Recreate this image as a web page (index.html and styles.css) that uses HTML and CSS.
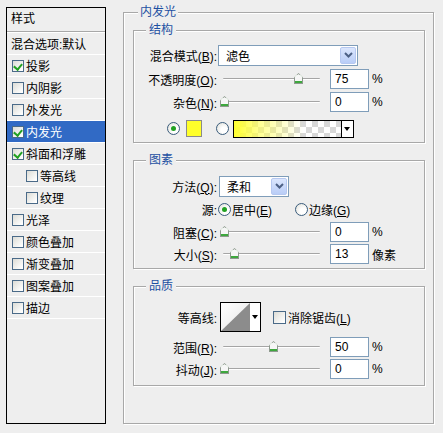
FILE: index.html
```html
<!DOCTYPE html>
<html>
<head>
<meta charset="utf-8">
<title>内发光</title>
<link rel="stylesheet" href="styles.css">
</head>
<body>
<div class="dialog">
  <div class="styles">
    <div class="styles-head">样式</div>
    <div class="item plain">混合选项:默认</div>
    <div class="item"><span class="cb on"></span>投影</div>
    <div class="item"><span class="cb"></span>内阴影</div>
    <div class="item"><span class="cb"></span>外发光</div>
    <div class="item sel"><span class="cb on"></span>内发光</div>
    <div class="item"><span class="cb on"></span>斜面和浮雕</div>
    <div class="item sub-item"><span class="cb"></span>等高线</div>
    <div class="item sub-item"><span class="cb"></span>纹理</div>
    <div class="item"><span class="cb"></span>光泽</div>
    <div class="item"><span class="cb"></span>颜色叠加</div>
    <div class="item"><span class="cb"></span>渐变叠加</div>
    <div class="item"><span class="cb"></span>图案叠加</div>
    <div class="item"><span class="cb"></span>描边</div>
  </div>

  <div class="main">
    <div class="group outer">
      <span class="legend">内发光</span>

      <div class="group sub g-struct">
        <span class="legend">结构</span>
        <div class="row h20">
          <span class="lbl">混合模式(<u>B</u>):</span>
          <div class="select sel-blend"><span class="sel-text">滤色</span><span class="dd"><svg width="9" height="6" viewBox="0 0 9 6"><path d="M1 1 L4.5 4.5 L8 1" fill="none" stroke="#4d6185" stroke-width="2"/></svg></span></div>
        </div>
        <div class="row h20 mt4">
          <span class="lbl">不透明度(<u>O</u>):</span>
          <div class="slider"><span class="track"></span><span class="thumb" style="left:74px"></span></div>
          <span class="num">75</span><span class="unit">%</span>
        </div>
        <div class="row h20 mt3">
          <span class="lbl">杂色(<u>N</u>):</span>
          <div class="slider"><span class="track"></span><span class="thumb" style="left:0px"></span></div>
          <span class="num">0</span><span class="unit">%</span>
        </div>
        <div class="row color-row">
          <span class="radio on"></span>
          <span class="swatch"></span>
          <span class="radio r2"></span>
          <span class="gradient"><span class="grad-fill"></span><span class="grad-dd"></span></span>
        </div>
      </div>

      <div class="group sub g-elem">
        <span class="legend">图素</span>
        <div class="row h20">
          <span class="lbl">方法(<u>Q</u>):</span>
          <div class="select sel-method"><span class="sel-text">柔和</span><span class="dd"><svg width="9" height="6" viewBox="0 0 9 6"><path d="M1 1 L4.5 4.5 L8 1" fill="none" stroke="#4d6185" stroke-width="2"/></svg></span></div>
        </div>
        <div class="row h20 mt3">
          <span class="lbl">源:</span>
          <span class="opt opt1"><span class="radio on"></span><span class="opt-text">居中(<u>E</u>)</span></span>
          <span class="opt"><span class="radio"></span><span class="opt-text">边缘(<u>G</u>)</span></span>
        </div>
        <div class="row h20 mt3">
          <span class="lbl">阻塞(<u>C</u>):</span>
          <div class="slider"><span class="track"></span><span class="thumb" style="left:0px"></span></div>
          <span class="num">0</span><span class="unit">%</span>
        </div>
        <div class="row h20 mt2">
          <span class="lbl">大小(<u>S</u>):</span>
          <div class="slider"><span class="track"></span><span class="thumb" style="left:10px"></span></div>
          <span class="num">13</span><span class="unit">像素</span>
        </div>
      </div>

      <div class="group sub g-quality">
        <span class="legend">品质</span>
        <div class="row h30">
          <span class="lbl">等高线:</span>
          <span class="contour">
            <span class="contour-pic"><svg width="29" height="28" viewBox="0 0 29 28"><defs><linearGradient id="cg" x1="0" y1="0" x2="1" y2="1"><stop offset="0" stop-color="#ffffff"/><stop offset="1" stop-color="#e4e4e4"/></linearGradient></defs><rect width="29" height="28" fill="url(#cg)"/><path d="M0 28 L29 0 L29 28 Z" fill="#8c8c8c"/></svg></span>
            <span class="contour-dd"></span>
          </span>
          <span class="cb big"></span><span class="cb-text">消除锯齿(<u>L</u>)</span>
        </div>
        <div class="row h20 mt5">
          <span class="lbl">范围(<u>R</u>):</span>
          <div class="slider"><span class="track"></span><span class="thumb" style="left:49px"></span></div>
          <span class="num">50</span><span class="unit">%</span>
        </div>
        <div class="row h20 mt2">
          <span class="lbl">抖动(<u>J</u>):</span>
          <div class="slider"><span class="track"></span><span class="thumb" style="left:0px"></span></div>
          <span class="num">0</span><span class="unit">%</span>
        </div>
      </div>
    </div>
  </div>
</div>
</body>
</html>
```
FILE: styles.css
```css
* { box-sizing: border-box; }
body {
  margin: 0;
  background: #eeeeee;
  font-family: "Liberation Sans", "Noto Sans CJK SC", sans-serif;
  font-size: 12px;
  color: #000;
}
u { text-decoration: underline; text-underline-offset: 1px; }

.dialog {
  display: flex;
  align-items: flex-start;
  width: 443px;
  height: 433px;
  padding: 7px 0 0 6px;
}

/* left list */
.styles {
  flex: none;
  width: 100px;
  height: 417px;
  border: 1px solid #000;
  background: #eeeeee;
}
.styles-head {
  height: 24px;
  line-height: 22px;
  padding-left: 4px;
  border-bottom: 1px solid #a8a8a8;
  box-shadow: 0 1px 0 #ffffff;
  margin-bottom: 1px;
}
.item {
  display: flex;
  align-items: center;
  height: 22px;
  border-bottom: 1px solid #ffffff;
  padding-left: 5px;
  white-space: nowrap;
}
.item.plain { padding-left: 4px; }
.item.sub-item { padding-left: 19px; }
.item.sel { background: #316ac5; color: #fff; }

.cb {
  flex: none;
  width: 12px;
  height: 12px;
  margin-right: 2px;
  border: 1px solid #4a6a88;
  background: linear-gradient(135deg, #dcdcd6 0%, #ffffff 90%);
  position: relative;
}
.cb.on::after {
  content: "";
  position: absolute;
  left: 2px;
  top: 1px;
  width: 4px;
  height: 6px;
  border-right: 2px solid #21a121;
  border-bottom: 2px solid #21a121;
  transform: rotate(40deg);
}
.cb.big { width: 13px; height: 13px; margin-left: 12px; }
.cb-text { white-space: nowrap; }

/* right side */
.main {
  flex: none;
  margin-left: 17px;
  margin-top: 5px;
}
.group {
  position: relative;
  border: 1px solid #a8a8a8;
  box-shadow: 1px 1px 0 #ffffff, inset 1px 1px 0 #ffffff;
}
.legend {
  position: absolute;
  top: -8px;
  line-height: 14px;
  padding: 0 2px;
  background: #eeeeee;
  color: #1d50a2;
  white-space: nowrap;
}
.outer {
  width: 311px;
  height: 412px;
  padding: 17px 0 0 9px;
}
.outer > .legend { left: 14px; }
.sub {
  width: 292px;
  margin-bottom: 17px;
}
.sub > .legend { left: 12px; padding: 0 3px; }
.g-struct { height: 113px; padding-top: 14px; }
.g-elem { height: 109px; padding-top: 15px; }
.g-quality { height: 100px; padding-top: 15px; }

.row {
  display: flex;
  align-items: center;
  white-space: nowrap;
}
.h20 { height: 20px; }
.h30 { height: 30px; }
.mt2 { margin-top: 2px; }
.mt3 { margin-top: 3px; }
.mt4 { margin-top: 4px; }
.mt5 { margin-top: 5px; }

.lbl {
  flex: none;
  width: 83px;
  text-align: right;
}

.select {
  flex: none;
  display: flex;
  align-items: center;
  height: 21px;
  border: 1px solid #7f9db9;
  background: #fff;
  padding: 1px;
}
.sel-blend { width: 140px; margin-left: 1px; }
.sel-method { width: 70px; margin-left: 2px; }
.sel-text { flex: 1; padding-left: 6px; }
.dd {
  flex: none;
  width: 16px;
  height: 17px;
  display: flex;
  align-items: center;
  justify-content: center;
  border: 1px solid #b6c8f0;
  border-radius: 2px;
  background: linear-gradient(#dbe6fd, #b9cdf7);
}

.slider {
  flex: none;
  position: relative;
  width: 102px;
  height: 14px;
  margin-left: 3px;
}
.track {
  position: absolute;
  left: 3px;
  right: 2px;
  top: 6px;
  height: 2px;
  border-top: 1px solid #a5a5a5;
  border-bottom: 1px solid #ffffff;
  border-radius: 1px;
}
.thumb {
  position: absolute;
  top: 1px;
  width: 9px;
  height: 11px;
  background:
    linear-gradient(#eaf7ea, #eaf7ea) 1px 2px / 7px 6px no-repeat,
    linear-gradient(#3ea83e, #3ea83e) 1px 8px / 7px 2px no-repeat,
    #8e9a8e;
  clip-path: polygon(50% 0, 100% 40%, 100% 100%, 0 100%, 0 40%);
}
.thumb::before {
  content: "";
  position: absolute;
  left: 1px;
  top: 1px;
  width: 7px;
  height: 7px;
  background: #f6f6f6;
  clip-path: polygon(50% 0, 100% 45%, 100% 100%, 0 100%, 0 45%);
}

.num {
  flex: none;
  width: 39px;
  height: 20px;
  margin-left: 8px;
  border: 1px solid #7f9db9;
  background: #fff;
  padding-left: 4px;
  line-height: 18px;
}
.unit { margin-left: 3px; }

.radio {
  flex: none;
  position: relative;
  width: 13px;
  height: 13px;
  border-radius: 50%;
  border: 1px solid #3a5c7c;
  background: radial-gradient(circle at 65% 65%, #ffffff 30%, #dcdcd4 100%);
}
.radio.on::after {
  content: "";
  position: absolute;
  left: 3px;
  top: 3px;
  width: 5px;
  height: 5px;
  border-radius: 50%;
  background: #21a121;
}

.color-row {
  height: 17px;
  margin-top: 8px;
  padding-left: 33px;
}
.swatch {
  flex: none;
  width: 16px;
  height: 17px;
  margin-left: 6px;
  border: 1px solid #8a8a8a;
  background: #ffff2a;
}
.radio.r2 { margin-left: 14px; }
.gradient {
  flex: none;
  display: flex;
  width: 121px;
  height: 18px;
  margin-left: 4px;
  border: 1px solid #000;
  background: #fff;
}
.grad-fill {
  flex: 1;
  border-right: 1px solid #000;
  background:
    linear-gradient(90deg, #ffff30 0%, rgba(255,255,80,0.6) 25%, rgba(255,255,120,0) 65%),
    repeating-conic-gradient(#d8d8d8 0 25%, #ffffff 0 50%) 0 0 / 12px 12px;
}
.grad-dd {
  flex: none;
  width: 11px;
  position: relative;
}
.grad-dd::after,
.contour-dd::after {
  content: "";
  position: absolute;
  left: 2px;
  top: 50%;
  margin-top: -2px;
  border-left: 3px solid transparent;
  border-right: 3px solid transparent;
  border-top: 4px solid #000;
}

.opt { display: flex; align-items: center; }
.opt1 { width: 77px; margin-left: 1px; }
.opt-text { margin-left: 1px; }

.contour {
  flex: none;
  display: flex;
  width: 41px;
  height: 30px;
  margin-left: 3px;
  border: 1px solid #000;
  background: #fff;
}
.contour-pic {
  flex: none;
  width: 29px;
  height: 28px;
  border-right: 1px solid #000;
  display: block;
}
.contour-pic svg { display: block; }
.contour-dd {
  flex: 1;
  position: relative;
}
```
